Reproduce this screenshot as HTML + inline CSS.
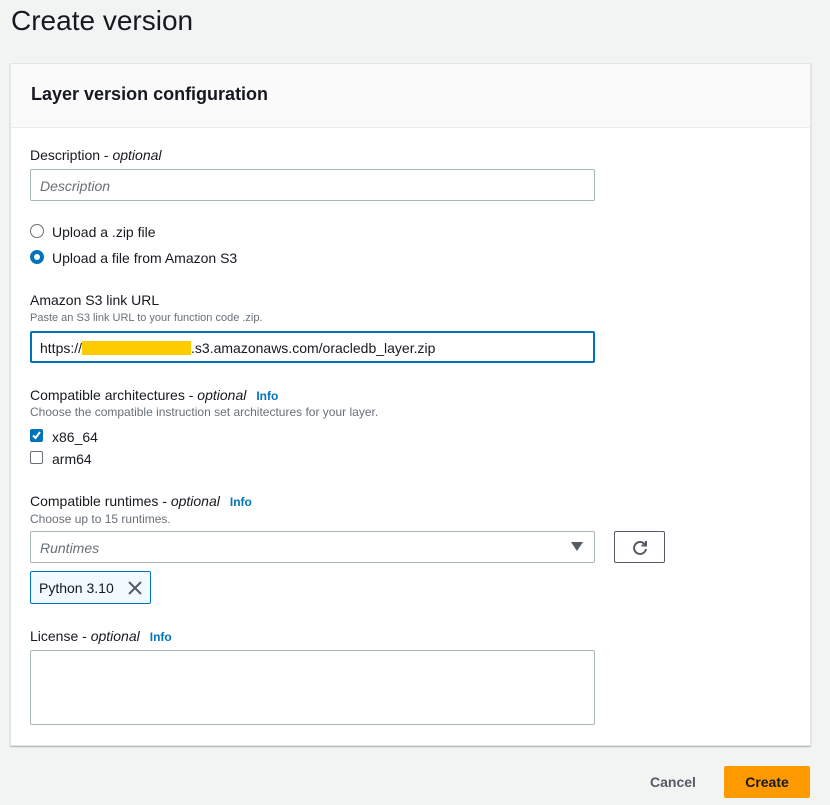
<!DOCTYPE html>
<html><head><style>
body{margin:0;width:830px;height:805px;background:#f2f3f3;font-family:"Liberation Sans",sans-serif;color:#16191f;position:relative;overflow:hidden}
.a{position:absolute}
h1{position:absolute;left:11px;top:5px;margin:0;font-size:28px;font-weight:normal;color:#16191f}
.panel{position:absolute;left:10px;top:63px;width:799px;height:681px;background:#fff;border:1px solid #e4e6e6;box-shadow:0 1px 1px rgba(0,28,36,.3)}
.hdr{position:absolute;left:0;top:0;width:799px;height:63px;background:#fafafa;border-bottom:1px solid #eaeded}
.lbl{font-size:14px;white-space:nowrap}
.lbl i{font-style:italic}
.info{color:#0073bb;font-weight:bold;font-size:12px;margin-left:10px}
.sm{font-size:12px;color:#687078;white-space:nowrap}
.inp{position:absolute;border:1px solid #aab7b8;border-radius:2px;background:#fff;box-sizing:border-box;font-size:14px}
.ph{color:#687078;font-style:italic}
</style></head><body>
<h1>Create version</h1>
<div class="panel">
<div class="hdr"><div class="a" style="left:20px;top:20px;font-size:18px;font-weight:bold">Layer version configuration</div></div>
</div>
<div class="a lbl" style="left:30px;top:147px">Description - <i>optional</i></div>
<div class="inp" style="left:30px;top:169px;width:565px;height:32px;padding:8px 9px"><span class="ph">Description</span></div>

<div class="a" style="left:30px;top:224px;width:14px;height:14px;border:1px solid #687078;border-radius:50%;box-sizing:border-box"></div>
<div class="a lbl" style="left:52px;top:224px">Upload a .zip file</div>
<div class="a" style="left:30px;top:250px;width:14px;height:14px;border:4px solid #0073bb;border-radius:50%;box-sizing:border-box;background:#fff"></div>
<div class="a lbl" style="left:52px;top:250px">Upload a file from Amazon S3</div>

<div class="a lbl" style="left:30px;top:292px">Amazon S3 link URL</div>
<div class="a sm" style="left:30px;top:312px;font-size:11px">Paste an S3 link URL to your function code .zip.</div>
<div class="inp" style="left:30px;top:331px;width:565px;height:32px;border:2px solid #0073bb;padding:7px 8px">https://<span style="display:inline-block;width:109px;height:14px;background:#ffcc00;vertical-align:-2px"></span>.s3.amazonaws.com/oracledb_layer.zip</div>

<div class="a lbl" style="left:30px;top:387px">Compatible architectures - <i>optional</i><span class="info">Info</span></div>
<div class="a sm" style="left:30px;top:405px">Choose the compatible instruction set architectures for your layer.</div>
<div class="a" style="left:30px;top:429px;width:13px;height:13px;background:#0073bb;border-radius:2px"><svg width="13" height="13" viewBox="0 0 13 13"><path d="M3 6.5l2.5 2.5 4.5-6" stroke="#fff" stroke-width="2" fill="none"/></svg></div>
<div class="a lbl" style="left:52px;top:429px">x86_64</div>
<div class="a" style="left:30px;top:451px;width:13px;height:13px;border:1px solid #687078;border-radius:2px;box-sizing:border-box"></div>
<div class="a lbl" style="left:52px;top:451px">arm64</div>

<div class="a lbl" style="left:30px;top:493px">Compatible runtimes - <i>optional</i><span class="info">Info</span></div>
<div class="a sm" style="left:30px;top:512px">Choose up to 15 runtimes.</div>
<div class="inp" style="left:30px;top:531px;width:565px;height:32px;padding:8px 9px"><span class="ph">Runtimes</span><span class="a" style="right:11px;top:10px;width:0;height:0;border-left:6px solid transparent;border-right:6px solid transparent;border-top:9px solid #545b64"></span></div>
<div class="inp" style="left:614px;top:531px;width:51px;height:32px;border-color:#545b64"><svg class="a" style="left:16px;top:7px" width="18" height="18" viewBox="0 0 18 18"><path d="M14 5.5A6 6 0 1 0 15 10" stroke="#545b64" stroke-width="2" fill="none"/><path d="M15 2v4.5h-4.5" stroke="#545b64" stroke-width="2" fill="none"/></svg></div>
<div class="inp" style="left:30px;top:571px;width:121px;height:33px;background:#f1faff;border-color:#0073bb;padding:8px 8px">Python 3.10<svg class="a" style="left:97px;top:9px" width="14" height="14" viewBox="0 0 14 14"><path d="M1 1l12 12M13 1L1 13" stroke="#545b64" stroke-width="2"/></svg></div>

<div class="a lbl" style="left:30px;top:628px">License - <i>optional</i><span class="info">Info</span></div>
<div class="inp" style="left:30px;top:650px;width:565px;height:75px"></div>

<div class="a" style="left:650px;top:774px;font-size:14px;font-weight:bold;color:#545b64">Cancel</div>
<div class="a" style="left:724px;top:766px;width:86px;height:32px;background:#ff9900;border-radius:2px;color:#16191f;font-size:14px;font-weight:bold;text-align:center;line-height:32px">Create</div>
</body></html>
